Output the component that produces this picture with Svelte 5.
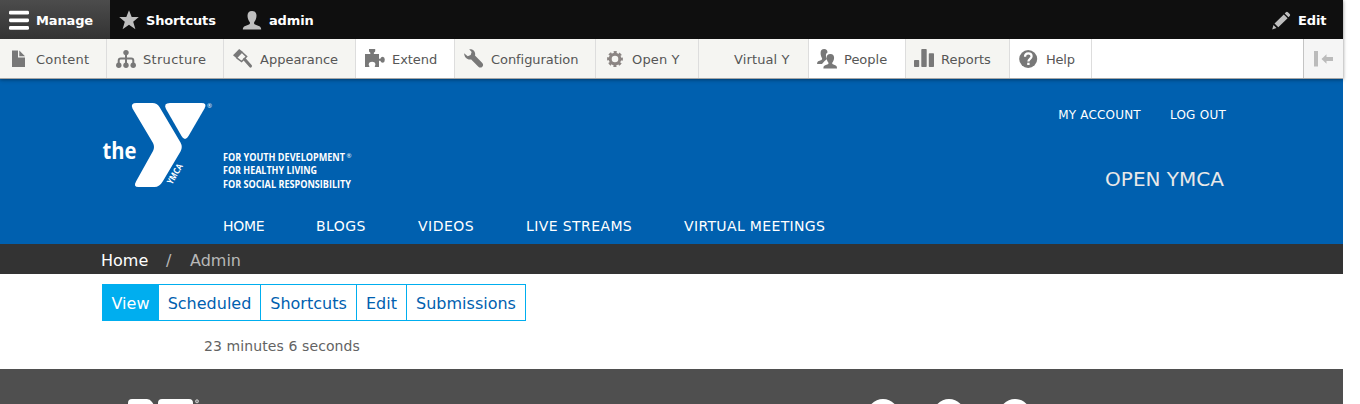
<script>
  const menu = [
    { label: 'Content', icon: 'content', width: 107, spacing: 0.22 },
    { label: 'Structure', icon: 'structure', width: 117, spacing: 0.3 },
    { label: 'Appearance', icon: 'appearance', width: 132, spacing: 0 },
    { label: 'Extend', icon: 'extend', width: 99, spacing: -0.05, light: true },
    { label: 'Configuration', icon: 'configuration', width: 141, spacing: -0.06 },
    { label: 'Open Y', icon: 'gear', width: 103, spacing: 0.15 },
    { label: 'Virtual Y', icon: '', width: 110, spacing: 0.12, shift: true },
    { label: 'People', icon: 'people', width: 97, spacing: 0, light: true, shift: true },
    { label: 'Reports', icon: 'reports', width: 104, spacing: 0, shift: true },
    { label: 'Help', icon: 'help', width: 82, spacing: -0.2, light: true }
  ];
  const nav = [
    { label: 'HOME', width: 93, spacing: -0.3 },
    { label: 'BLOGS', width: 102, spacing: 0.45 },
    { label: 'VIDEOS', width: 108, spacing: 0.5 },
    { label: 'LIVE STREAMS', width: 158, spacing: 0.4 },
    { label: 'VIRTUAL MEETINGS', width: 150, spacing: 0.35 }
  ];
  const tabs = [
    { label: 'View', width: 56, active: true },
    { label: 'Scheduled', width: 102 },
    { label: 'Shortcuts', width: 96 },
    { label: 'Edit', width: 50 },
    { label: 'Submissions', width: 118 }
  ];
</script>

{#snippet icon(name)}
  <svg class="icon" viewBox="0 0 20 20" width="20" height="20" fill="currentColor">
    {#if name === 'burger'}
      <g fill="#fff"><rect y=".8" width="20" height="3.800" rx="1.400" /><rect y="8.400" width="20" height="3.800" rx="1.400" /><rect y="16" width="20" height="3.800" rx="1.400" /></g>
    {:else if name === 'star'}
      <path d="M10 .3l2.700 6.700h7.100l-5.600 4.700 2.200 7.600-6.400-4.500-6.400 4.500 2.200-7.600L.2 7h7.100z" />
    {:else if name === 'user'}
      <path d="M10 1c3 0 4.500 1.900 4.500 4.800 0 2.500-1 4.700-2.200 6.100-.5.800-.3 2.200.7 2.600l4.400 1.800c1.100.5 1.700 1.500 1.800 3.200H.8c.1-1.700.7-2.700 1.800-3.200L7 14.500c1-.4 1.200-1.800.7-2.600C6.500 10.500 5.500 8.300 5.500 5.800 5.500 2.900 7 1 10 1z" />
    {:else if name === 'pencil'}
      <path d="M14.900 2.300q1-1 2 0l1.800 1.800q1 1 0 2l-1.200 1.200-3.800-3.800zM12.800 4.400l3.800 3.800-9.300 9.100-3.800-3.800zM2.500 15l3 3-4.300 1.600z" />
    {:else if name === 'content'}
      <path d="M3 1.500h6v7h7V18H3zM10.300 1.500L16 7.200h-5.700z" />
    {:else if name === 'structure'}
      <circle cx="10" cy="3.600" r="2.700" /><circle cx="2.800" cy="16.200" r="2.700" /><circle cx="10" cy="16.200" r="2.700" /><circle cx="17.200" cy="16.200" r="2.700" />
      <path d="M10 4v12M2.700 16v-4.500q0-2 2-2h10.600q2 0 2 2V16" fill="none" stroke="currentColor" stroke-width="2" />
    {:else if name === 'appearance'}
      <path d="M0 6.200L6.200 0l3.800 3-6.200 6.400z" />
      <path d="M9 3.200l4.600 4.400-5 4.900-4.900-3.700" fill="none" stroke="currentColor" stroke-width="1.500" />
      <path d="M11.500 10.300l6 6.800" fill="none" stroke="currentColor" stroke-width="3" stroke-linecap="round" />
    {:else if name === 'extend'}
      <path d="M0 5h5.300q.400-1.500-.5-1.700Q4 3 4 2V.100h6.200V2q0 1-.800 1.300-.900.200-.500 1.700H14v4.700h1.300q.500-2 2.600-2 1.900.300 1.900 3t-1.900 3q-2.100 0-2.600-2H14V18h-3.700q-.700 0-.500-1c1.200-1 .900-4.200-2.700-4.200S3.200 16 4.400 17q.200 1-.500 1H0z" />
    {:else if name === 'configuration'}
      <path d="M5.200.300C9-.200 11.900 2.600 11 6.500l7.300 7.500q1.700 2.200-.200 3.900-1.900 1.500-3.700-.200l-7.200-7.300C3.600 11.200.200 8.700.100 4.300l3.600 2.900 3-1.200.900-2.900z" />
    {:else if name === 'gear'}
      <g fill="none" stroke="#8b8583"><circle cx="10" cy="10" r="4.800" stroke-width="3" /><circle cx="10" cy="10" r="6.700" stroke-width="2.400" stroke-dasharray="3 2.262" stroke-dashoffset="1.500" /></g>
    {:else if name === 'people'}
      <path d="M7.200.100c2.200 0 3.300 1.300 3.300 3.400C9 4.300 8.600 6 9.200 8.200L10 10l-2.600 2.200L5 15H.100c0-2 .6-2.700 1.800-3.100l2.500-1c.900-.4.900-1.300.5-2C4.200 7.800 3.600 6 3.600 4 3.600 1.600 4.700.100 7.200.100z" />
      <path d="M13.400 5c2.500 0 3.700 1.500 3.700 3.800 0 1.800-.7 3.500-1.700 4.600-.4.800-.2 1.500.5 1.900l2.300.9c1.300.5 1.800 1.400 1.800 3.300H6.400c0-1.900.5-2.800 1.800-3.300l2.600-.9c.7-.4.900-1.100.5-1.900-1-1.100-1.700-2.800-1.700-4.600C9.600 6.500 10.800 5 13.400 5z" />
    {:else if name === 'reports'}
      <rect y="11" width="5.200" height="7" rx=".7" /><rect x="7.300" width="5.400" height="18" rx=".7" /><rect x="14.800" y="4.300" width="5.200" height="13.700" rx=".7" />
    {:else if name === 'help'}
      <circle cx="9.200" cy="10" r="9" />
      <path d="M6 7.800Q6 4.300 9.300 4.300t3.300 3c0 2.600-3.200 2.600-3.200 5.200" fill="none" stroke="#fff" stroke-width="2.200" /><rect x="8.200" y="13.700" width="2.400" height="2.300" fill="#fff" />
    {/if}
  </svg>
{/snippet}

<div class="page">
  <div class="toolbar">
    <nav class="bar">
      <span class="bar-item manage">{@render icon('burger')}<b>Manage</b></span>
      <span class="bar-item shortcuts">{@render icon('star')}<b>Shortcuts</b></span>
      <span class="bar-item">{@render icon('user')}<b>admin</b></span>
      <span class="bar-item edit">{@render icon('pencil')}<b>Edit</b></span>
    </nav>
    <nav class="tray">
      {#each menu as item}
        <span class="tray-item" class:light={item.light} class:shift={item.shift} style="width:{item.width}px;letter-spacing:{item.spacing}px">
          {@render icon(item.icon)}<span>{item.label}</span>
        </span>
      {/each}
      <span class="toggle">
        <svg width="20" height="20" viewBox="0 0 20 20" fill="#bbb"><path d="M1 2h4v15.500H1zM8.500 10l5-4.800V8H20v4h-6.500v2.800z" /></svg>
      </span>
    </nav>
  </div>

  <header class="site">
    <svg class="logo" width="260" height="100" viewBox="0 0 260 100" fill="#fff">
      <path d="M35.500 8H51.500q4.500 0 7 4L79.500 47.500q2.500 4.500 0 9L62 86q-3.500 6-8.500 6H37.500q-5.500 0-2.500-5.500l17-30.500q2-4 0-8L31.500 13.500Q29 8 35.500 8z" />
      <path d="M69 8h31.500q6 0 3 5.500L87.500 41q-3.500 6-7 0L65 14Q62 8 69 8z" />
      <text class="the" x="1.500" y="64" textLength="34" lengthAdjust="spacingAndGlyphs">the</text>
      <text class="ymca" transform="translate(71 90) rotate(-60)" textLength="22" lengthAdjust="spacingAndGlyphs">YMCA</text>
      <text class="reg" x="106" y="13">®</text>
      <g class="tagline">
        <text x="122" y="65.500" textLength="122" lengthAdjust="spacingAndGlyphs">FOR YOUTH DEVELOPMENT</text>
        <text x="122" y="79" textLength="94" lengthAdjust="spacingAndGlyphs">FOR HEALTHY LIVING</text>
        <text x="122" y="92.500" textLength="128" lengthAdjust="spacingAndGlyphs">FOR SOCIAL RESPONSIBILITY</text>
      </g>
      <text class="reg" x="245.500" y="63">®</text>
    </svg>
    <div class="account">
      <div class="links"><span class="my">MY ACCOUNT</span><span class="out">LOG OUT</span></div>
      <div class="name">OPEN YMCA</div>
    </div>
    <nav class="main-nav">
      {#each nav as item}<span style="width:{item.width}px;letter-spacing:{item.spacing}px">{item.label}</span>{/each}
    </nav>
  </header>

  <div class="crumbs"><span class="home">Home</span><span class="slash">/</span><span>Admin</span></div>

  <main>
    <nav class="tabs">
      {#each tabs as tab}<span class:active={tab.active} style="width:{tab.width}px">{tab.label}</span>{/each}
    </nav>
    <p>23 minutes 6 seconds</p>
  </main>

  <footer>
    <svg class="foot-logo" width="80" height="6" viewBox="0 0 80 6" fill="#fff"><path d="M0 6V4q0-4 4-4h15q3 0 5 3l2 3zM30 6V4q0-4 4-4h27q4 0 4 4v2z" /><circle cx="69" cy="2.300" r="1.500" fill="#888" stroke="#ccc" /></svg>
    <div class="social"><i></i><i></i><i></i></div>
  </footer>
</div>

<style>
  :global(body) { margin: 0; background: #fff; overflow: hidden; }
  .page { width: 1343px; height: 404px; font-family: "DejaVu Sans", Verdana, sans-serif; white-space: nowrap; overflow: visible; }
  .toolbar { position: relative; z-index: 1; height: 79px; box-shadow: 0 0 3px rgba(0, 0, 0, .2), 0 1px 4px rgba(0, 0, 0, .3); font-size: 13px; }
  .bar { display: flex; height: 39px; background: #0f0f0f; color: #fff; }
  .bar-item { display: flex; align-items: center; gap: 7px; padding-left: 9px; color: #bebebe; box-sizing: border-box; }
  .bar-item b { color: #fff; font-weight: 700; padding-top: 1px; letter-spacing: -.15px; }
  .manage { width: 110px; background: linear-gradient(#4c4c4c, #333); }
  .shortcuts { width: 123px; }
  .edit { margin-left: auto; width: 81px; }
  .icon { flex: none; }
  .tray { display: flex; height: 39px; background: #fff; border-bottom: 1px solid #a6a6a6; color: #565656; }
  .tray-item { display: flex; align-items: center; gap: 7px; box-sizing: border-box; padding-left: 9px; border-right: 1px solid #ddd; background: #f5f5f2; }
  .tray-item .icon { color: #787878; }
  .tray-item > span { padding-top: 1px; }
  .shift { padding-left: 8px; }
  .light { background: #fff; }
  .toggle { margin-left: auto; width: 39px; display: flex; align-items: center; border-left: 1px solid #c4c4c4; background: #f5f5f5; }
  .toggle svg { margin-left: 9px; }

  .site { height: 165px; box-sizing: border-box; background: #0060af; color: #fff; display: grid; grid-template-columns: 260px 1fr; grid-template-rows: 129px 36px; padding: 0 116px 0 101px; }
  .logo { margin-top: 16px; overflow: visible; }
  .account { text-align: right; }
  .links { display: flex; justify-content: flex-end; gap: 29px; padding: 28px 1px 0 0; line-height: 16px; font-size: 12px; }
  .my { letter-spacing: .18px; }
  .out { letter-spacing: .25px; }
  .name { color: #e8e8e8; margin-top: 44px; padding-right: 3px; font-size: 20px; line-height: 24px; }
  .the { font: 700 24px "Open Sans", sans-serif; }
  .ymca { font: 700 9px "Open Sans", sans-serif; }
  .reg { font: 6px "Open Sans", sans-serif; }
  .tagline { font: 700 10px "Open Sans", sans-serif; }
  .main-nav { grid-column: 1 / 3; display: flex; padding: 9px 0 0 122px; font-size: 14px; line-height: 18px; }
  .main-nav span { flex: none; }
  .crumbs { display: flex; height: 30px; padding-left: 101px; background: #333; color: #b8b8b8; font-size: 16px; line-height: 33px; }
  .home { width: 65px; color: #fff; }
  .slash { width: 24px; }
  main { height: 95px; box-sizing: border-box; padding: 10px 0 0 102px; }
  .tabs { display: flex; width: 422px; height: 35px; border: 1px solid #00aeef; color: #0060af; font-size: 16px; line-height: 37px; }
  .tabs span { box-sizing: border-box; flex: none; text-align: center; border-right: 1px solid #00aeef; }
  .tabs .active { background: #00aeef; color: #fff; }
  .tabs span:last-child { border-right: 0; }
  p { margin: 0; padding: 15px 0 0 102px; color: #636363; font-size: 14px; line-height: 20px; letter-spacing: .1px; }
  footer { display: flex; height: 35px; background: #4f4f4f; overflow: hidden; }
  .foot-logo { margin: 30px 0 0 128px; }
  .social { display: flex; gap: 34px; margin: 30px 0 0 659px; }
  .social i { width: 32px; height: 32px; flex: none; border-radius: 50%; background: #fff; }
</style>
